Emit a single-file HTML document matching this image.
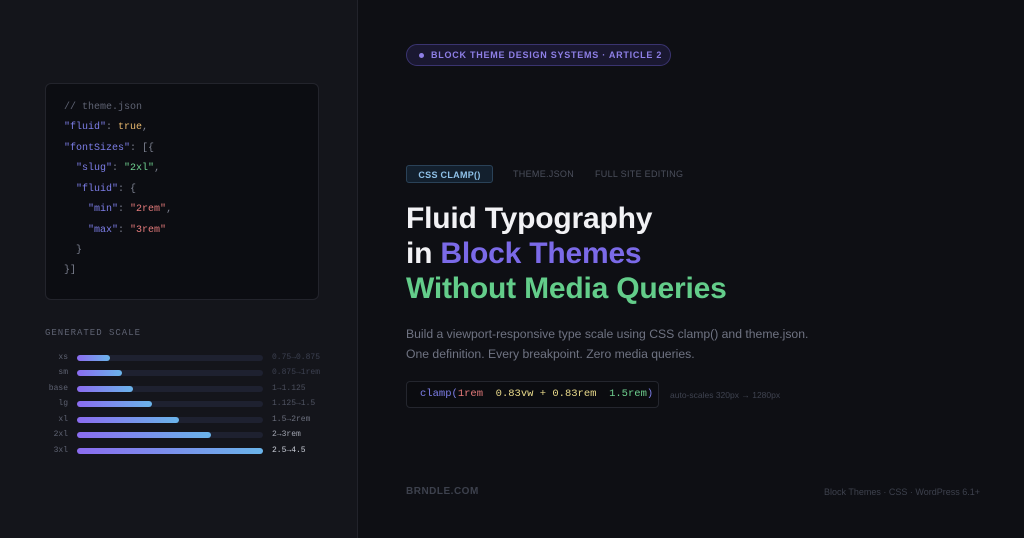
<!DOCTYPE html>
<html><head><meta charset="utf-8"><style>
*{margin:0;padding:0;box-sizing:border-box}
body{width:1024px;height:538px;overflow:hidden;background:#0e0f14;font-family:"Liberation Sans",sans-serif;position:relative}
.left{position:absolute;left:0;top:0;width:358px;height:538px;background:#14151b;border-right:1px solid #22232b}
.code{position:absolute;left:45px;top:83px;width:274px;height:217px;background:#0c0d12;border:1px solid #23242c;border-radius:6px;font-family:"Liberation Mono",monospace;font-size:10px;color:#7b7f8e}
.code div{position:absolute;left:18px;white-space:pre}
.k{color:#7d7ee8}.t{color:#e8b86d}.s{color:#6fd08f}.r{color:#e47a7a}.c{color:#5f6373}
.gl{position:absolute;left:45px;top:328px;font-family:"Liberation Mono",monospace;font-size:9px;letter-spacing:1px;color:#5e6272}
.row{position:absolute;left:0;width:358px;height:10px;font-family:"Liberation Mono",monospace;font-size:8px;color:#5e6272}
.row .l{position:absolute;right:290px;top:0}
.row .tr{position:absolute;left:77px;top:2px;width:186px;height:6px;border-radius:3px;background:#1e2130}
.row .f{position:absolute;left:77px;top:2px;height:6px;border-radius:3px;background:linear-gradient(90deg,#8b6cf0,#6ab4ea)}
.row .v{position:absolute;left:272px;top:0}
.pill{position:absolute;left:406px;top:44px;width:265px;height:22px;border:1px solid #3a3470;background:#1a1831;border-radius:11px;color:#8e7fe6;font-size:9px;font-weight:bold;letter-spacing:.75px;line-height:20px;padding-left:24px}
.pill:before{content:"";position:absolute;left:12px;top:8px;width:5px;height:5px;border-radius:50%;background:#8e7fe6}
.tag{position:absolute;top:165px;font-size:9px;letter-spacing:.3px;line-height:18px;color:#4b4f5c}
.tag1{left:406px;width:87px;height:18px;background:#13202e;border:1px solid #2a4258;border-radius:3px;color:#8fc1e8;font-weight:bold;text-align:center}
h1{position:absolute;left:406px;top:201px;font-size:30px;line-height:35px;font-weight:bold;color:#f2f2f5;letter-spacing:-.2px}
.p{color:#7b6ae8}.g{color:#63cd8a}
.para{position:absolute;left:406px;top:324px;font-size:12.2px;line-height:20px;color:#6f7382}
.cb{position:absolute;left:406px;top:381px;width:253px;height:27px;border:1px solid #24262e;border-radius:4px;background:#0b0c10;font-family:"Liberation Mono",monospace;font-size:10.5px;line-height:25px;padding-left:13px;color:#7d7ee8;white-space:pre}
.cb .y{color:#e8d98a}
.note{position:absolute;left:670px;top:390px;font-size:8.5px;color:#3f4350}
.ft{position:absolute;top:486px;font-size:10px;color:#3d414d}
</style></head><body>
<div class="left">
<div class="code">
<div class="c" style="top:18px">// theme.json</div>
<div style="top:38px"><span class="k">"fluid"</span>: <span class="t">true</span>,</div>
<div style="top:59px"><span class="k">"fontSizes"</span>: [{</div>
<div style="top:79px">  <span class="k">"slug"</span>: <span class="s">"2xl"</span>,</div>
<div style="top:100px">  <span class="k">"fluid"</span>: {</div>
<div style="top:120px">    <span class="k">"min"</span>: <span class="r">"2rem"</span>,</div>
<div style="top:141px">    <span class="k">"max"</span>: <span class="r">"3rem"</span></div>
<div style="top:161px">  }</div>
<div style="top:181px">}]</div>
</div>
<div class="gl">GENERATED SCALE</div>
<div class="row" style="top:353px"><span class="l">xs</span><span class="tr"></span><span class="f" style="width:33px"></span><span class="v" style="color:#3c4050">0.75→0.875</span></div>
<div class="row" style="top:368px"><span class="l">sm</span><span class="tr"></span><span class="f" style="width:45px"></span><span class="v" style="color:#3c4050">0.875→1rem</span></div>
<div class="row" style="top:384px"><span class="l">base</span><span class="tr"></span><span class="f" style="width:56px"></span><span class="v" style="color:#4a4e5c">1→1.125</span></div>
<div class="row" style="top:399px"><span class="l">lg</span><span class="tr"></span><span class="f" style="width:75px"></span><span class="v" style="color:#4f5362">1.125→1.5</span></div>
<div class="row" style="top:415px"><span class="l">xl</span><span class="tr"></span><span class="f" style="width:102px"></span><span class="v" style="color:#6a6e7c">1.5→2rem</span></div>
<div class="row" style="top:430px"><span class="l">2xl</span><span class="tr"></span><span class="f" style="width:134px"></span><span class="v" style="color:#a0a4b0">2→3rem</span></div>
<div class="row" style="top:446px"><span class="l">3xl</span><span class="tr"></span><span class="f" style="width:186px"></span><span class="v" style="color:#c8ccd6">2.5→4.5</span></div>
</div>
<div class="pill">BLOCK THEME DESIGN SYSTEMS · ARTICLE 2</div>
<div class="tag tag1">CSS CLAMP()</div>
<div class="tag" style="left:513px">THEME.JSON</div>
<div class="tag" style="left:595px">FULL SITE EDITING</div>
<h1>Fluid Typography<br>in <span class="p">Block Themes</span><br><span class="g">Without Media Queries</span></h1>
<div class="para">Build a viewport-responsive type scale using CSS clamp() and theme.json.<br>One definition. Every breakpoint. Zero media queries.</div>
<div class="cb">clamp(<span class="r">1rem</span>  <span class="y">0.83vw + 0.83rem</span>  <span class="s">1.5rem</span>)</div>
<div class="note">auto-scales 320px → 1280px</div>
<div class="ft" style="left:406px;font-weight:bold;letter-spacing:.5px">BRNDLE.COM</div>
<div class="ft" style="right:44px;top:487px;font-size:9px">Block Themes · CSS · WordPress 6.1+</div>
</body></html>
